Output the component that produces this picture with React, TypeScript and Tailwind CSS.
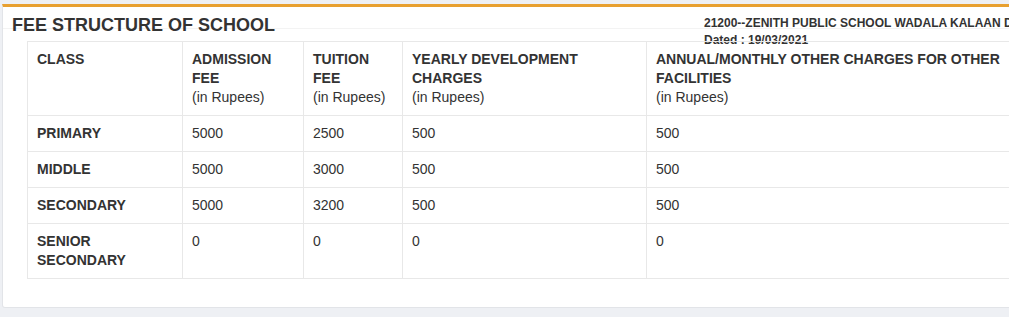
const rows = [
  { cls: ["PRIMARY"], admission: "5000", tuition: "2500", yearly: "500", annual: "500" },
  { cls: ["MIDDLE"], admission: "5000", tuition: "3000", yearly: "500", annual: "500" },
  { cls: ["SECONDARY"], admission: "5000", tuition: "3200", yearly: "500", annual: "500" },
  { cls: ["SENIOR", "SECONDARY"], admission: "0", tuition: "0", yearly: "0", annual: "0" },
];

const cell = "border border-[#e8e8e8] pl-[9px] pr-2 py-2 align-top text-left";

const HeadCell = ({ lines, rupees = true, w }: { lines: string[]; rupees?: boolean; w: string }) => (
  <th className={`${cell} ${w} font-bold`}>
    {lines.map((l, i) => (
      <div key={i}>{l}</div>
    ))}
    {rupees && <div className="font-normal">(in Rupees)</div>}
  </th>
);

export default function App() {
  return (
    <div
      className="h-[317px] w-[1009px] overflow-hidden bg-[#eef0f4] pt-1 pl-[2px] text-[#333]"
      style={{ fontFamily: '"Liberation Sans", Arial, sans-serif' }}
    >
      <div className="w-[1040px] h-[304px] bg-white border-t-[3px] border-t-[#e8a030] border-x border-b border-[#e2e4e8] rounded-b-[3px]">
        <div className="flex items-start h-[22px] border-b border-[#f3f3f3] pt-[9px] pl-[9px]">
          <h1 className="w-[692px] shrink-0 text-[18px] leading-none font-bold">
            FEE STRUCTURE OF SCHOOL
          </h1>
          <div className="-mt-px text-[12px] leading-[17px] font-bold whitespace-nowrap">
            <div>21200--ZENITH PUBLIC SCHOOL WADALA KALAAN DISTT. KAPURTHALA</div>
            <div>Dated : 19/03/2021</div>
          </div>
        </div>
        <table className="relative mt-[12px] ml-[24px] border-collapse text-[14px] leading-[19px] table-fixed">
          <thead>
            <tr>
              <HeadCell lines={["CLASS"]} rupees={false} w="w-[155px]" />
              <HeadCell lines={["ADMISSION", "FEE"]} w="w-[121px]" />
              <HeadCell lines={["TUITION", "FEE"]} w="w-[99px]" />
              <HeadCell lines={["YEARLY DEVELOPMENT", "CHARGES"]} w="w-[244px]" />
              <HeadCell lines={["ANNUAL/MONTHLY OTHER CHARGES FOR OTHER", "FACILITIES"]} w="w-[380px]" />
            </tr>
          </thead>
          <tbody>
            {rows.map((r) => (
              <tr key={r.cls.join(" ")}>
                <td className={`${cell} font-bold`}>
                  {r.cls.map((c) => (
                    <div key={c}>{c}</div>
                  ))}
                </td>
                <td className={cell}>{r.admission}</td>
                <td className={cell}>{r.tuition}</td>
                <td className={cell}>{r.yearly}</td>
                <td className={cell}>{r.annual}</td>
              </tr>
            ))}
          </tbody>
        </table>
      </div>
    </div>
  );
}
